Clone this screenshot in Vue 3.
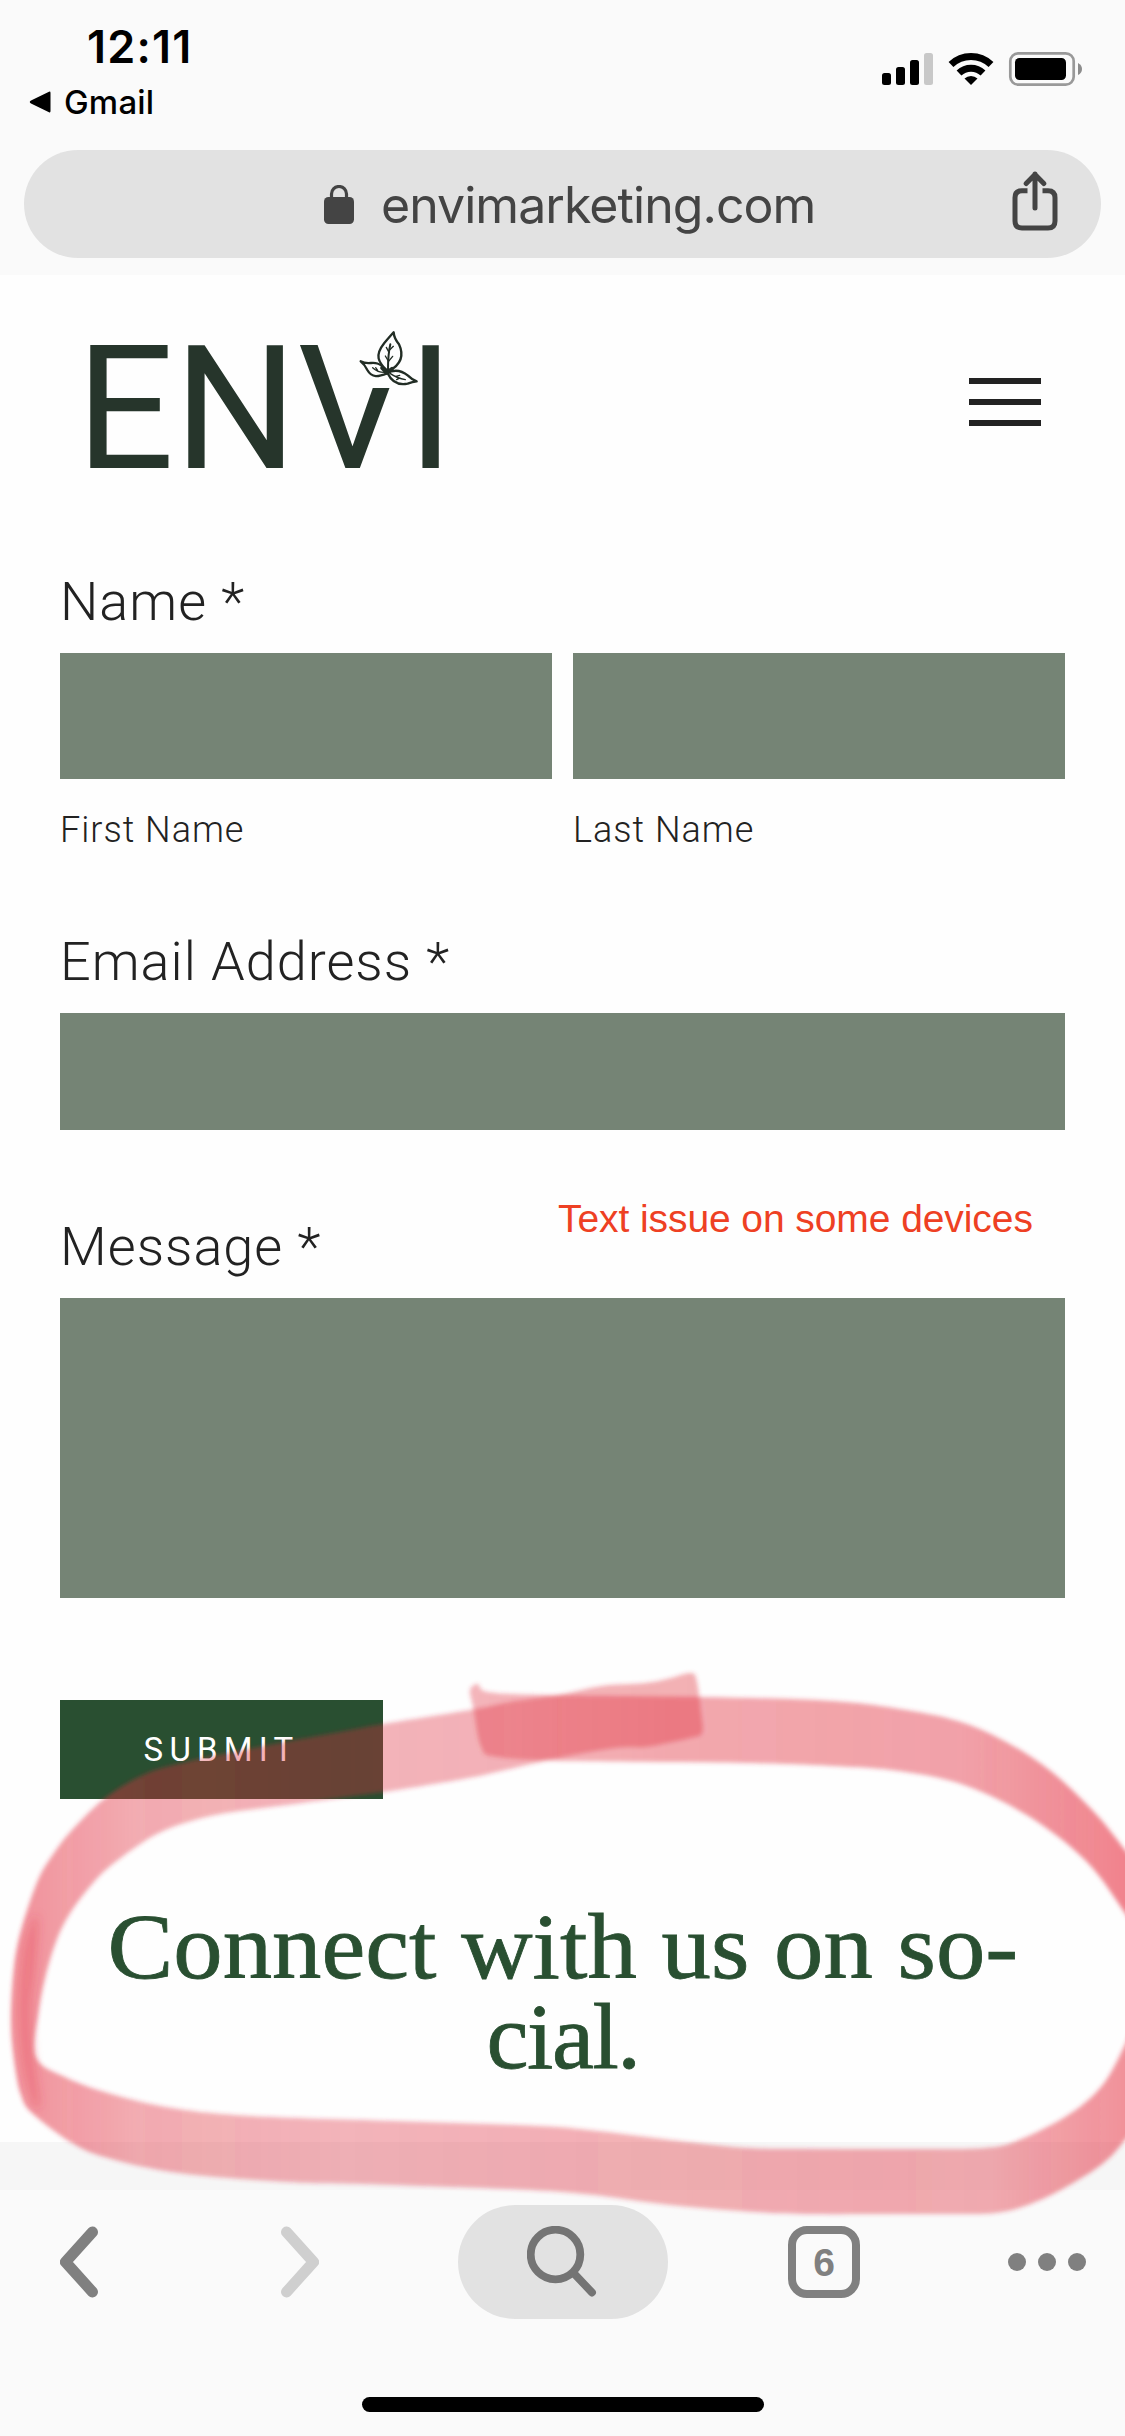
<script setup>
// Closed smooth outline through a list of points (Catmull-Rom to Bezier).
function outline(pts) {
  const n = pts.length
  let d = `M${pts[0][0]} ${pts[0][1]}`
  for (let i = 0; i < n; i++) {
    const a = pts[(i - 1 + n) % n]
    const b = pts[i]
    const c = pts[(i + 1) % n]
    const e = pts[(i + 2) % n]
    d += `C${b[0] + (c[0] - a[0]) / 6} ${b[1] + (c[1] - a[1]) / 6} ${c[0] - (e[0] - b[0]) / 6} ${c[1] - (e[1] - b[1]) / 6} ${c[0]} ${c[1]}`
  }
  return d + 'Z'
}

// First half of the marker loop: starts at the top and runs off to the right.
const strokeStart = outline([
  [470, 1690], [478, 1684], [488, 1692], [545, 1695], [702, 1697], [833, 1701], [912, 1711], [964, 1723],
  [1008, 1743], [1052, 1772], [1095, 1813], [1125, 1850], [1150, 1885], [1150, 1950], [1125, 1913],
  [1087, 1862], [1030, 1817], [964, 1785], [899, 1771], [833, 1766], [746, 1763], [571, 1761],
  [497, 1757], [481, 1747], [473, 1707]
])

// Second half: comes back from the right, round the bottom and left, and ends on top of the start.
const strokeEnd = outline([
  [691, 1673], [697, 1682], [701, 1713], [702, 1733], [690, 1738], [667, 1743], [645, 1747], [615, 1748], [558, 1758],
  [484, 1775], [440, 1783], [383, 1792], [287, 1805], [215, 1815], [161, 1832], [118, 1860],
  [93, 1883], [66, 1920], [50, 1960], [39, 2010], [36, 2057], [65, 2077], [108, 2093],
  [172, 2108], [251, 2116], [394, 2121], [538, 2126], [598, 2131], [688, 2142], [749, 2148],
  [820, 2149], [900, 2149], [950, 2149], [985, 2148], [1014, 2142], [1065, 2117], [1101, 2087], [1125, 2045], [1150, 1990],
  [1150, 2105], [1125, 2140], [1101, 2165], [1057, 2192], [1022, 2207], [995, 2213], [965, 2214], [890, 2214], [813, 2214],
  [756, 2212], [670, 2205], [562, 2192], [394, 2185], [287, 2182], [179, 2173], [108, 2158],
  [72, 2143], [32, 2113], [21, 2095], [15, 2067], [11, 2023], [14, 1967], [22, 1927],
  [38, 1880], [54, 1853], [72, 1830], [104, 1799], [143, 1775], [186, 1762], [269, 1745],
  [340, 1732], [383, 1724], [470, 1710], [510, 1702], [558, 1695], [602, 1686], [645, 1683], [667, 1679]
])

const leftFold = outline([
  [22, 1960], [28, 1930], [36, 1915], [38, 1930], [35, 1970], [31, 2010], [34, 2060], [40, 2104], [32, 2102], [22, 2060], [19, 2010]
])
</script>

<template>
  <div class="screen">
    <header class="browser-top">
      <div class="status">
        <div class="status-left">
          <div class="clock">12:11</div>
          <div class="back-app">
            <svg width="22" height="22" viewBox="0 0 22 22"><path d="M2 9.6 20 .8Q21.5 0 21.5 2V20Q21.5 22 20 21.2L2 12.4Q-.5 11 2 9.6Z" /></svg>
            <span>Gmail</span>
          </div>
        </div>
        <svg class="status-icons" width="202" height="36" viewBox="881 51 202 36">
          <rect x="882" y="73" width="9" height="12" rx="2.5" />
          <rect x="896" y="67" width="9" height="18" rx="2.5" />
          <rect x="910" y="60" width="9" height="25" rx="2.5" />
          <rect x="924" y="53" width="9" height="32" rx="2.5" fill="#c8c8c8" />
          <g fill="none" stroke="#000" stroke-width="7">
            <path d="M951 64.5A29 29 0 0 1 991 64.5" />
            <path d="M959 73A17.5 17.5 0 0 1 983 73" />
          </g>
          <path d="M964.5 78.5A9.5 9.5 0 0 1 977.5 78.5L971 85Z" />
          <rect x="1010.3" y="53.3" width="63.4" height="31.4" rx="8" fill="none" stroke="#999" stroke-width="2.7" />
          <rect x="1015" y="58" width="51" height="22" rx="4.5" />
          <path d="M1078 63Q1082 65 1082 69T1078 75Z" fill="#8c8c8c" />
        </svg>
      </div>
      <div class="address">
        <svg class="lock" width="30" height="39" viewBox="0 0 30 39">
          <rect y="12" width="30" height="27" rx="4.5" fill="#444" />
          <path d="M7.5 14V9A7.5 7.5 0 0 1 22.5 9V14" fill="none" stroke="#444" stroke-width="3.2" />
        </svg>
        <span class="url">envimarketing.com</span>
        <svg class="share" width="46" height="60" viewBox="0 0 46 60" fill="none" stroke="#444" stroke-width="5" stroke-linecap="round">
          <path d="M15.500 19.700H10Q3 19.700 3 26.700V50Q3 57 10 57H36Q43 57 43 50V26.700Q43 19.700 36 19.700H30.500" stroke-linecap="butt" />
          <path d="M23 37V3M14.200 12.500 23 3.500 31.800 12.500" stroke-linejoin="round" />
        </svg>
      </div>
    </header>

    <main class="page">
      <div class="site-header">
        <svg class="logo" width="420" height="180" viewBox="60 310 420 180">
          <text x="76 174 297.500 407" y="468">ENVI</text>
          <path d="M366 338H415V388H366Z" fill="#fefefe" />
          <g transform="translate(60 310) scale(.33333)" fill="none" stroke="#222d25" stroke-linecap="round" stroke-linejoin="round">
            <path stroke-width="7" d="M980 183C956 155 942 138 973 99Q991 78 1001 67Q1002 84 1017 103C1032 135 1023 164 986 184" />
            <path stroke-width="7" d="M980 180C956 157 945 158 933 159Q915 161 902 154Q914 163 922 180C936 205 956 200 981 190" />
            <path stroke-width="7" d="M983 190C995 216 1013 227 1043 221Q1058 215 1070 214Q1056 209 1044 197C1022 179 1001 178 980 190" />
            <path stroke-width="11" d="M966 174 980 188 996 176" />
            <path stroke-width="6" d="M984 182C984 155 984 132 991 103" />
            <path stroke-width="4" d="M987 127 979 112M988 121 1000 109M984 151 976 138M985 155 998 139M978 187Q955 189 938 173M953 181 947 173M990 190Q1012 205 1036 209M1008 199 1019 196M1020 204 1010 209" />
          </g>
        </svg>
        <div class="menu"><i></i><i></i><i></i></div>
      </div>

      <form class="form" @submit.prevent>
        <div class="label">Name *</div>
        <div class="names">
          <div class="col"><div class="field name-field"></div><div class="hint">First Name</div></div>
          <div class="col"><div class="field name-field"></div><div class="hint">Last Name</div></div>
        </div>
        <div class="label email-label">Email Address *</div>
        <div class="field email-field"></div>
        <div class="label message-label">Message *</div>
        <div class="field message-field"></div>
        <button class="submit">SUBMIT</button>
      </form>

      <h2 class="social">
        <span class="line first">Connect with us on so-</span>
        <span class="line second">cial.</span>
      </h2>
    </main>

    <footer class="browser-bottom">
      <div class="strip"></div>
      <div class="toolbar">
        <svg class="chev back" width="38" height="72" viewBox="0 0 38 72"><path d="M32.500 6 5.500 36 32.500 66" /></svg>
        <svg class="chev forward" width="38" height="72" viewBox="0 0 38 72"><path d="M5.500 6 32.500 36 5.500 66" /></svg>
        <div class="search">
          <svg width="72" height="72" viewBox="0 0 72 72" fill="none" stroke="#747474" stroke-width="7.800">
            <circle cx="28.500" cy="28.500" r="24.800" />
            <path d="M47 47.500 65 66.500" stroke-linecap="round" />
          </svg>
        </div>
        <div class="tabs">6</div>
        <div class="dots"><i></i><i></i><i></i></div>
      </div>
      <div class="home"></div>
    </footer>

    <div class="note">Text issue on some devices</div>

    <svg class="marker" width="1125" height="2436" viewBox="0 0 1125 2436">
      <defs>
        <filter id="soft" x="-5%" y="-5%" width="110%" height="110%"><feGaussianBlur stdDeviation="2" /></filter>
        <filter id="softer" x="-80%" y="-20%" width="260%" height="140%"><feGaussianBlur stdDeviation="5" /></filter>
        <linearGradient id="startInk" gradientUnits="userSpaceOnUse" x1="470" y1="0" x2="1125" y2="0">
          <stop offset="0" stop-color="#e23544" stop-opacity=".36" />
          <stop offset=".3" stop-color="#e23544" stop-opacity=".43" />
          <stop offset=".75" stop-color="#e23544" stop-opacity=".46" />
          <stop offset="1" stop-color="#e83848" stop-opacity=".62" />
        </linearGradient>
        <linearGradient id="endInk" gradientUnits="userSpaceOnUse" x1="10" y1="0" x2="1125" y2="0">
          <stop offset="0" stop-color="#e63545" stop-opacity=".54" />
          <stop offset=".045" stop-color="#e43142" stop-opacity=".48" />
          <stop offset=".12" stop-color="#e02d3c" stop-opacity=".39" />
          <stop offset=".3" stop-color="#de2d3c" stop-opacity=".35" />
          <stop offset=".5" stop-color="#e02d3c" stop-opacity=".37" />
          <stop offset=".88" stop-color="#e02d3c" stop-opacity=".4" />
          <stop offset="1" stop-color="#e63545" stop-opacity=".54" />
        </linearGradient>
      </defs>
      <g filter="url(#soft)">
        <path :d="strokeStart" fill="url(#startInk)" />
        <path :d="strokeEnd" fill="url(#endInk)" />
      </g>
      <path :d="leftFold" fill="#e63545" fill-opacity=".3" filter="url(#softer)" />
    </svg>
  </div>
</template>

<style>
body { background: #fff; }
</style>

<style scoped>
.screen {
  position: relative;
  width: 1125px;
  height: 2436px;
  overflow: hidden;
  display: flex;
  flex-direction: column;
  background: #fefefe;
  font-family: Inter, "Liberation Sans", sans-serif;
}
.screen svg { display: block; flex: none; }
.browser-top { height: 275px; background: #fafafa; }
.status { display: flex; justify-content: space-between; height: 150px; }
.clock { margin: 20px 0 0 87px; height: 54px; font-size: 45px; line-height: 54px; font-weight: 600; letter-spacing: 1.2px; }
.back-app { display: flex; align-items: center; gap: 13px; margin: 8px 0 0 29px; height: 40px; font-size: 33px; font-weight: 500; letter-spacing: .2px; }
.status-icons { margin: 51px 42px 0 0; }
.address {
  display: flex;
  align-items: center;
  height: 108px;
  margin: 0 24px;
  padding: 0 43px 0 300px;
  box-sizing: border-box;
  border-radius: 54px;
  background: #e2e2e2;
}
.url { margin-left: 27px; padding-top: 2px; font-size: 50px; color: #444; white-space: nowrap; letter-spacing: -.95px; line-height: 60px; }
.share { margin: -7px 0 0 auto; }
.site-header { display: flex; justify-content: space-between; height: 180px; margin: 35px 84px 0 60px; }
.logo { overflow: visible; }
.logo text { font-family: Roboto, sans-serif; font-size: 173px; fill: #26352b; }
.menu { display: flex; flex-direction: column; gap: 15px; width: 72px; margin-top: 68px; }
.menu i { height: 6px; background: #222; }
.form { display: flex; flex-direction: column; margin: 78px 60px 0; font-family: Roboto, sans-serif; font-weight: 300; color: #222; }
.label { height: 85px; line-height: 68px; font-size: 54px; letter-spacing: 1px; }
.names { display: flex; gap: 21px; }
.col { flex: 1; }
.field { background: #758475; }
.name-field { height: 126px; }
.hint { margin-top: 30px; height: 42px; line-height: 42px; font-size: 36px; letter-spacing: 1px; }
.email-label { margin-top: 77px; }
.email-field { height: 117px; }
.message-label { margin-top: 83px; }
.message-field { height: 300px; }
.submit {
  align-self: flex-start;
  width: 323px;
  height: 99px;
  margin-top: 102px;
  padding: 0;
  border: 0;
  background: #294f31;
  color: #fff;
  font: 400 33px/98px Roboto, sans-serif;
  letter-spacing: 6.2px;
}
.social {
  display: flex;
  flex-direction: column;
  align-items: center;
  margin: 103px 0 0;
  font: 400 93px/90px "Liberation Serif", serif;
  color: #294f31;
  -webkit-text-stroke: .8px #294f31;
}
.line { height: 90px; white-space: nowrap; transform: scaleX(1.062); }
.second { letter-spacing: -1.5px; transform: scaleX(1.02); }
.browser-bottom { margin-top: auto; height: 294px; background: #fafafa; }
.strip { height: 48px; background: #f6f6f6; }
.toolbar { display: flex; align-items: center; height: 144px; }
.chev { fill: none; stroke: #808080; stroke-width: 11; stroke-linecap: round; stroke-linejoin: round; }
.back { margin-left: 60px; }
.forward { margin-left: 183px; stroke: #cfcfcf; }
.search { display: flex; align-items: center; justify-content: center; width: 210px; height: 114px; margin-left: 139px; border-radius: 57px; background: #e2e2e2; }
.tabs {
  width: 72px;
  height: 72px;
  margin-left: 120px;
  box-sizing: border-box;
  border: 8px solid #808080;
  border-radius: 19px;
  color: #808080;
  text-align: center;
  font: 700 39px/57px "Liberation Sans", sans-serif;
}
.dots { display: flex; gap: 12px; margin-left: 148px; }
.dots i { width: 18px; height: 18px; border-radius: 50%; background: #808080; }
.home { width: 402px; height: 15px; margin: 63px auto 0; border-radius: 8px; background: #000; }
.note {
  position: absolute;
  left: 558px;
  top: 1196px;
  font: 39px/46px "Liberation Sans", sans-serif;
  letter-spacing: -.08px;
  color: #ee4023;
  white-space: nowrap;
}
.marker { position: absolute; left: 0; top: 0; pointer-events: none; }
</style>
